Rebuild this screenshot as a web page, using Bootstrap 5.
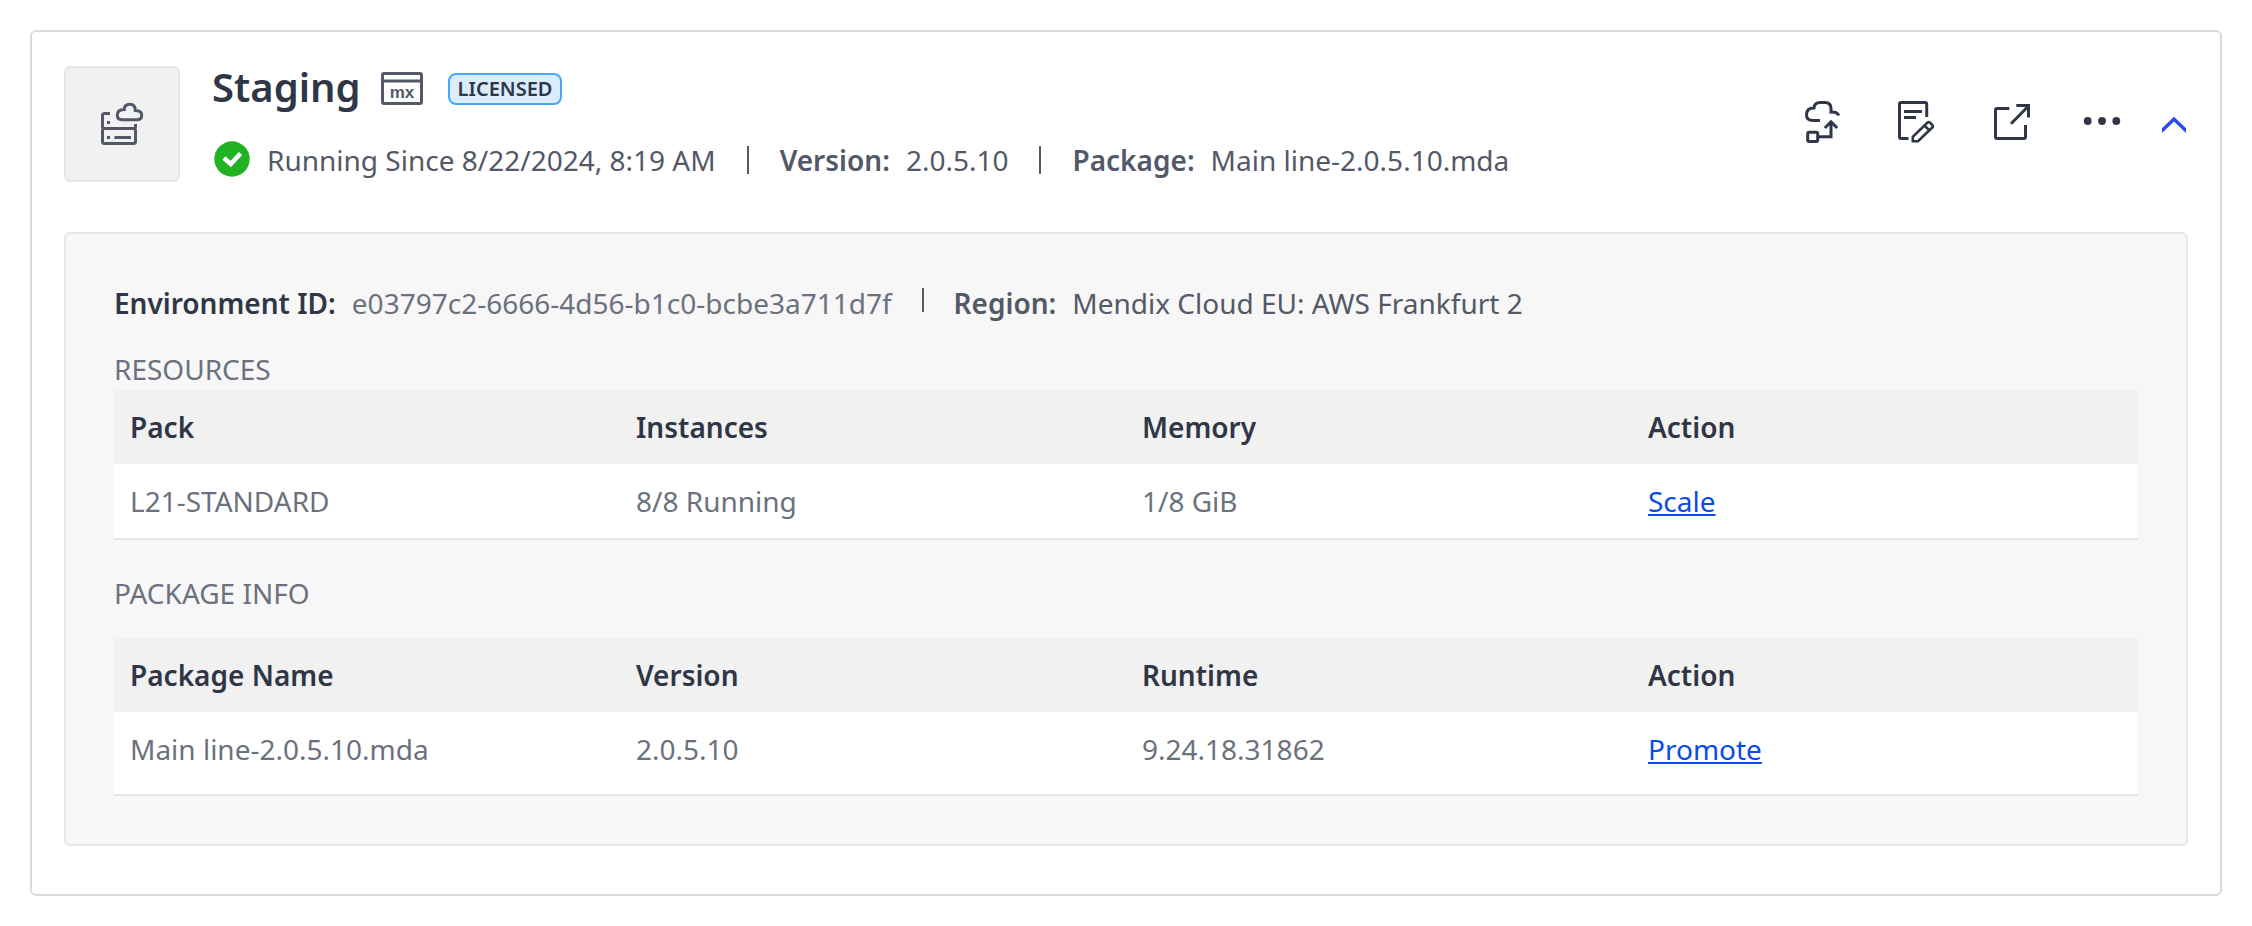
<!DOCTYPE html>
<html lang="en">
<head>
<meta charset="utf-8">
<meta name="viewport" content="width=device-width, initial-scale=1">
<title>Staging environment</title>
<link href="https://cdn.jsdelivr.net/npm/bootstrap@5.3.0/dist/css/bootstrap.min.css" rel="stylesheet">
<style>
  :root { --ink: #2f3646; --body: #535966; --muted: #6c717e; --line: #e6e6e6; }
  body { font-family: "Noto Sans", sans-serif; font-size: 28px; line-height: 42px; color: var(--body); padding: 30px; background: #fff; }
  .env-card { border: 2px solid #dadada; border-radius: 6px; padding: 34px 32px 48px; }
  .env-head { gap: 32px; margin-bottom: 50px; }
  .env-tile { width: 116px; height: 116px; background: #f1f1f1; border: 2px solid var(--line); border-radius: 6px; }
  .title-row { gap: 20px; }
  .title-tags { gap: 25px; }
  .env-title { font-size: 40px; line-height: 42px; font-weight: 600; color: var(--ink); }
  .env-badge { font-size: 20px; line-height: 28px; font-weight: 600; color: var(--ink); background: #dbecff; border: 2px solid #47a6ff; border-radius: 8px; padding: 0 8px; }
  .mx-text { font-family: "Liberation Sans", sans-serif; font-size: 17px; font-weight: 700; fill: currentColor; stroke: none; }
  .status-row { margin-top: 31px; }
  .status-icon { margin-right: 15px; }
  .label-pair { display: flex; gap: 16px; }
  .label-strong { font-weight: 600; }
  .text-ink { color: var(--ink); }
  .text-soft { color: var(--muted); }
  .rule { width: 2px; height: 28px; background: var(--body); margin: 0 31px; }
  .rule-short { height: 24px; margin: 6px 30px 0; align-self: flex-start; }
  .env-actions { color: var(--ink); }
  .action-group { gap: 52px; }
  .more-group { gap: 36px; margin-left: 44px; }
  .icon-btn { background: none; border: 0; padding: 0; color: inherit; line-height: 0; }
  .icon-btn.toggle { color: #254cf0; }
  .env-panel { background: #f7f7f7; border: 2px solid var(--line); border-radius: 6px; padding: 48px; }
  .section-name { font-size: 28px; line-height: 42px; font-weight: 400; color: var(--muted); }
  .env-table { table-layout: fixed; width: 100%; }
  .env-table th { background: #f1f1f1; color: var(--ink); font-weight: 600; padding: 16px; }
  .env-table td { background: #fff; color: var(--muted); padding: 16px; border-bottom: 2px solid var(--line); }
  .env-table.roomy td { padding-bottom: 24px; }
  .table-gap { margin-bottom: 32px; }
  .env-table a { color: #0a4be8; }
  svg { fill: none; stroke: currentColor; stroke-width: 3; display: block; }
  .solid { fill: currentColor; stroke: none; }
</style>
</head>
<body>
<main class="env-card">
  <header class="env-head d-flex">
    <div class="env-tile d-flex align-items-center justify-content-center flex-shrink-0">
      <svg width="44" height="44" viewBox="0 0 44 44" aria-hidden="true">
        <path d="M10 11.500H4.500Q2.500 11.500 2.500 13.500V24.500Q2.500 26.500 4.500 26.500H33.500Q35.500 26.500 35.500 24.500V22M4.500 26.500Q2.500 26.500 2.500 28.500V39.500Q2.500 41.500 4.500 41.500H33.500Q35.500 41.500 35.500 39.500V28.500Q35.500 26.500 33.500 26.500"/>
        <path d="M22 17.700Q17.300 17.700 17.300 13Q17.300 7.700 24.300 7.500Q24.300 2.300 29.800 2.300Q35.300 2.300 35.300 8.500Q41.700 8.500 41.700 13.200Q41.700 17.700 37 17.700Z"/>
        <path d="M7 20.500H10M7 35.500H10M14.500 35.500H31"/>
      </svg>
    </div>
    <div class="flex-grow-1">
      <div class="title-row d-flex align-items-center">
        <h1 class="env-title mb-0">Staging</h1>
        <div class="title-tags d-flex align-items-center pt-1">
          <svg width="42" height="34" viewBox="0 0 42 34" role="img" aria-label="Mendix app">
            <rect x="1.500" y="1.500" width="39" height="30" rx="1.500"/><path d="M1.500 9H40.500"/>
            <text class="mx-text" x="21" y="26" text-anchor="middle">mx</text>
          </svg>
          <span class="env-badge">LICENSED</span>
        </div>
      </div>
      <div class="status-row d-flex align-items-center">
        <svg class="status-icon" width="40" height="40" viewBox="0 0 40 40" role="img" aria-label="Running"><circle cx="20" cy="19" r="17.700" fill="#22b322" stroke="none"/><path d="M12 18L18.700 24L28.500 13.500" stroke="#fff" stroke-width="4.600"/></svg>
        <span>Running Since 8/22/2024, 8:19 AM</span>
        <span class="rule"></span>
        <span class="label-pair"><span class="label-strong">Version:</span><span>2.0.5.10</span></span>
        <span class="rule"></span>
        <span class="label-pair"><span class="label-strong">Package:</span><span>Main line-2.0.5.10.mda</span></span>
      </div>
    </div>
    <div class="env-actions d-flex align-items-center">
      <div class="action-group d-flex">
        <button class="icon-btn" type="button" aria-label="Deploy"><svg width="44" height="48" viewBox="0 0 44 48">
          <path d="M20 20.500H13Q6.500 20.500 6.500 14.700Q6.500 8 14 8Q14.500 2.500 20 2.500H25Q31 2.500 31 8.500V12Q37 11.500 38.800 15.500"/>
          <path d="M18.500 36.800H31V22M24.800 28L31 21.800L37.200 28"/>
          <rect x="7.700" y="32.300" width="10" height="9.200" rx="1.500"/></svg></button>
        <button class="icon-btn" type="button" aria-label="Edit details"><svg width="44" height="48" viewBox="0 0 44 48">
          <path d="M12.500 38.500H5Q3.500 38.500 3.500 37V4Q3.500 2.500 5 2.500H29.200Q30.700 2.500 30.700 4V17M8 11.500H26M8 17.500H20"/>
          <path stroke-width="2.600" d="M16.800 41.300V36.700L31.300 22.700Q32.700 21.500 34 22.700L36.300 25Q37.400 26.300 36.300 27.500L22 41.300ZM28.500 25.500L33.300 30.300"/></svg></button>
        <button class="icon-btn" type="button" aria-label="Open application"><svg width="44" height="48" viewBox="0 0 44 48">
          <path d="M17.300 8.500H5Q3.500 8.500 3.500 10V37Q3.500 38.500 5 38.500H32Q33.500 38.500 33.500 37V25M19 23.800L36.500 6M24.300 5.500H36.500V17.500"/></svg></button>
      </div>
      <div class="more-group d-flex">
        <button class="icon-btn" type="button" aria-label="More options"><svg class="solid" width="44" height="48" viewBox="0 0 44 48">
          <circle cx="7.700" cy="21" r="3.900"/><circle cx="22" cy="21" r="3.900"/><circle cx="36.300" cy="21" r="3.900"/></svg></button>
        <button class="icon-btn toggle" type="button" aria-label="Collapse" aria-expanded="true"><svg class="solid" width="28" height="48" viewBox="0 0 28 48">
          <path d="M14 16.700L26 28.300V33L14 21.500L2 33V28.300Z"/></svg></button>
      </div>
    </div>
  </header>
  <section class="env-panel">
    <div class="d-flex align-items-center mb-4">
      <span class="label-pair"><span class="label-strong text-ink">Environment ID:</span><span class="text-soft">e03797c2-6666-4d56-b1c0-bcbe3a711d7f</span></span>
      <span class="rule rule-short"></span>
      <span class="label-pair"><span class="label-strong">Region:</span><span>Mendix Cloud EU: AWS Frankfurt 2</span></span>
    </div>
    <h2 class="section-name mb-0">RESOURCES</h2>
    <table class="env-table table-gap">
      <thead><tr><th scope="col">Pack</th><th scope="col">Instances</th><th scope="col">Memory</th><th scope="col">Action</th></tr></thead>
      <tbody><tr><td>L21-STANDARD</td><td>8/8 Running</td><td>1/8 GiB</td><td><a href="#">Scale</a></td></tr></tbody>
    </table>
    <h2 class="section-name mb-4">PACKAGE INFO</h2>
    <table class="env-table roomy">
      <thead><tr><th scope="col">Package Name</th><th scope="col">Version</th><th scope="col">Runtime</th><th scope="col">Action</th></tr></thead>
      <tbody><tr><td>Main line-2.0.5.10.mda</td><td>2.0.5.10</td><td>9.24.18.31862</td><td><a href="#">Promote</a></td></tr></tbody>
    </table>
  </section>
</main>
<script src="https://cdn.jsdelivr.net/npm/bootstrap@5.3.0/dist/js/bootstrap.bundle.min.js"></script>
</body>
</html>
